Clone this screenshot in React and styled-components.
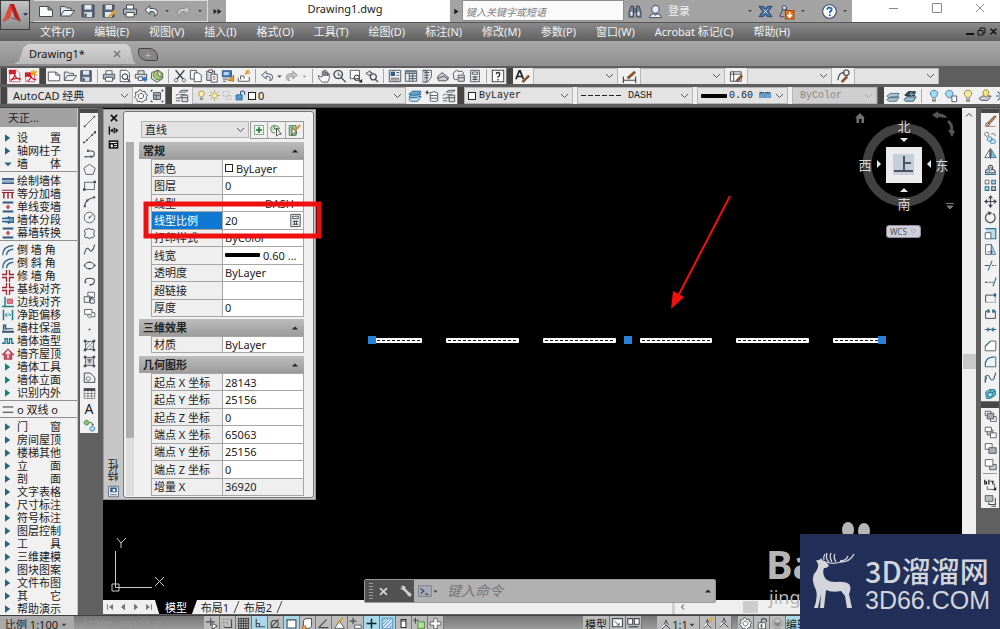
import React from "react";
import styled, { createGlobalStyle, css } from "styled-components";

const K = "#454b52";
const B = "#2f7296";
const L = "#b9dcea";
const W = "#ffffff";
const R = "#b3202c";
const N = "none";

/* Each icon is a list of [path, stroke, fill, strokeWidth] on a 16 x 16 grid. */
const icons = {
  newFile: [["M1.5 3.5H10L14.5 7V13.5H1.5Z M10 3.5V7H14.5", K, "#fbfcfd"]],
  open: [["M1.5 13V3.5H6L7.5 5H12V7", K, "#dfe6ee"], ["M1.5 13L5 7.5H15.5L11.5 13Z", K, "#eef3f8"]],
  save: [["M2 2H14V14H2Z", "#3b4557", "#56627a"], ["M4.500 2H11.500V6.500H4.500Z", N, "#e4e9f0"], ["M4 9H12V14H4Z", N, "#d5dbe4"], ["M5.500 10.500V14", K, N, 2]],
  saveAs: [["M2 2H13V14H2Z", "#3b4557", "#56627a"], ["M4.500 2H11V6.500H4.500Z M4 9H11V14H4Z", N, "#dfe5ed"], ["M8 14L14.500 7.500", "#e2a32f", N, 2.5]],
  print: [["M4.500 6V2H11.500V6", K, W], ["M1.500 6H14.500V11.500H1.500Z", K, "#aeb6bf"], ["M4 9.500H12V14H4Z", K, W]],
  undo: [["M2 7L7 2.500V5.500H10.500Q14.500 6 14.500 9.500T11 13.500Q12.500 11 11.500 9.500T7 8.500V11.500Z", K, "#e7edf5"]],
  redo: [["M14 7L9 2.500V5.500H5.500Q1.500 6 1.500 9.500T5 13.500Q3.500 11 4.500 9.500T9 8.500V11.500Z", "#8c8c8c", "#c9c9c9"]],
  caret: [["M3 5.500H13L8 11Z", N, "#444"]],
  caretDim: [["M4 6.500H12L8 10.500Z", N, "#888"]],
  fast: [["M1 3L7 8L1 13Z M8 3L15 8L8 13Z", N, "#222"]],
  play: [["M4 3L12 8L4 13Z", N, "#222"]],
  binoc: [["M2 14V9L4 3H6.500V14Z M9.500 14V3H12L14 9V14Z M6.500 6H9.500V9H6.500", "#3d4756", "#77849a"], ["M3.500 9H5.500V12.500H3.500Z M10.500 9H12.500V12.500H10.500Z", N, "#ecf0f7"]],
  user: [["M8 1.500A4 4.200 0 1 1 7.900 1.500Z", "#3d4756", "#dfe6ef"], ["M1.500 14.500Q2 11 6 10.500L8 12L10 10.500Q14 11 14.500 14.500Z", "#3d4756", "#e9eef5"]],
  exchange: [["M1 2.500H6L8 5L10 2.500H15L11 8L15 13.500H10L8 11L6 13.500H1L5 8Z", "#27466f", "#4a6fa5"], ["M6 6L8 8L10 6M6 10L8 8L10 10", "#e8eef8", N]],
  triApp: [["M6 2.500A2 2 0 1 1 5.900 2.500M4.500 6L1.500 12.500M8 5L9 8M1.500 13H6", "#4a5568", "#dbe2ed"], ["M7 7H15V15H7Z", "#a9480f", "#e0701e"], ["M11 8.500V12.500M9 11L11 13.500L13 11", W, N, 1.5]],
  help: [["M8 .8A7.200 7.200 0 1 1 7.900 .8Z", "#44506a", W, 1.2], ["M5.500 6Q6 3.500 8.300 3.800Q11 4.200 10.200 6.500Q9.500 7.500 8.500 8.200L8.300 9.800M8.300 11V13", "#3563ad", N, 2]],
  pdf: [["M2 1.500H10L13.500 5V14.500H2Z", "#c58", W], ["M1 1H9V6H1Z", N, "#cf202b"], ["M3 13C7 10 8 7 7.500 5.500C8 10 11 12 14.500 11.500C10 10 6 11 3 13", "#d01f2c", N, 1.5]],
  pdfStar: [["M2 4.500H12V14.500H2Z", "#c58", W], ["M1 4H8V9H1Z", N, "#cf202b"], ["M4 14C8 11 8 9 7.500 7.500C9 11 10 12 14 12", "#d01f2c", N, 1.5], ["M11 0L12 3L15.500 1.500L13.500 5L15.500 8L11.500 6.500L8 8L9 4.500L7 2L10 2.500Z", N, "#f2a516"]],
  preview: [["M2.500 1.500H10L13 4.500V14.500H2.500Z", K, W], ["M8 5.500A3.200 3.200 0 1 1 7.900 5.500M10.500 11L14 15", K, N, 1.4]],
  plot: [["M4.500 6V2H11.500V6M1.500 6H14.500V10.500H1.500Z", K, "#dde1e5"], ["M5 9H10V13H5Z", K, W], ["M9 10.500H12V8L15.500 12L12 15.500V13H9Z", N, "#2a74bd"]],
  globe: [["M2 4L9 1.500L14.500 5V11L8 15L1.500 11Z", K, "#dbe7d9"], ["M9 2A5 5 0 1 1 8.900 2Z", "#4d7a3a", "#a8c66c"], ["M9 2V7L13 9", K, W]],
  cut: [["M3 1.500L12 12M13 1.500L4 12", K, N, 1.6], ["M3.500 11A1.900 1.900 0 1 1 3.400 11M12.500 11A1.900 1.900 0 1 1 12.400 11", K, W]],
  copy: [["M1.500 1.500H8.500V11.500H1.500Z", K, "#f3f5f7"], ["M6 4.500H11L14 7V14.500H6Z", K, W]],
  paste: [["M2 2.500H11V13H2Z", K, "#cfd3d6"], ["M4.500 1H8.500V4H4.500Z", K, W], ["M7 6H14V15H7Z M9 9H12M9 11.500H12", K, W]],
  match: [["M1.500 2H12V9H1.500Z", "#2b568d", "#3e79bd"], ["M3 3.500H9V7H3Z", N, "#b8d8f0"], ["M2 11.500H8M2 14H6", K, N], ["M8 13L14.500 7V14Z", "#b06b1e", "#e59b3a"]],
  block: [["M1.500 10V14H14V9M4 12V8H8V11", K, W], ["M9 6L14 1.500M10 4L15 5M11 1V6", "#e09632", N, 1.5]],
  hand: [["M4 9L1.500 7.500Q.8 9 4 13L6 15H12L14 11V5.500H12.300V8V3.500H10.200V8V1.500H8V8V3H6V9L4 9", K, W]],
  zoomRt: [["M6 1.500A4.800 4.800 0 1 1 5.900 1.500M9.500 10L14.500 15", K, N, 1.5], ["M6 4V7H9", K, N]],
  zoomWin: [["M1.500 1.500H12V11H1.500Z", K, W], ["M9 7A3 3 0 1 1 8.900 7M11 12L14.500 15.500", K, N, 1.4], ["M15 11V15H11Z", N, "#222"]],
  zoomPrev: [["M6 2L1 5L6 8V6.300H8V4H6Z", K, "#dce3ea"], ["M9.500 5.500A3.500 3.500 0 1 1 9.400 5.500M12 12L15 15", K, N, 1.5]],
  props: [["M1.500 1.500H14.500V14.500H1.500Z", K, "#f3f6f9"], ["M3 3H8V8H3Z", N, "#315a8d"], ["M9.500 4H13M9.500 7H13M3 10.500H13M3 12.500H13", K, N]],
  center: [["M1.500 2H14.500V14H1.500Z M1.500 5H14.500M6 5V14M10 5V14M6 8H14M6 11H14", K, "#e3ebf2"], ["M2 2H14V4H2Z", N, "#65809c"]],
  palettes: [["M3.500 1.500H13V9L9 14.500H3.500Z", K, W], ["M3 2H8V15H3", K, "#c7ccd0"], ["M5 4H11M5 7H11M5 10H10", K, N]],
  sheet: [["M1.500 9L7 4L14.500 10L12 13.500H3Z", K, "#c9cdd1"], ["M2 11L9 8L14 12", K, N]],
  markup: [["M3 3Q5 0 8 3Q13 1 13 6M3 3Q0 6 2 8Q1 13 6 12", K, N], ["M7 7H14V14H7Z M7 10H14", K, "#d7dbdf"]],
  calc: [["M3 1.500H13V14.500H3Z", K, "#eef1f4"], ["M5 3.500H11V6H5Z", K, W], ["M5 9H11M5 12H11M7 8V13M9 8V13", K, N]],
  qmark: [["M1.500 1.500H14.500V14.500H1.500Z", K, W, 1.2], ["M6 6Q6 4 8 4T10 6T8 9V10M8 11.500V13", "#333", N, 1.6]],
  textBrush: [["M1 11L4.500 2H5.500L9 11M2.500 8H7.500", "#222", N, 1.8], ["M8 14L15 7", "#7a5230", N, 2.6]],
  dimBrush: [["M1.500 8V15M14.500 8V15M1.500 12H14.500", K, N, 1.3], ["M6 10L14 3", "#8a5630", N, 3]],
  tableBrush: [["M1.500 3H13V13H1.500Z M1.500 5.500H13M5 3V13", K, W], ["M8 13L14 7", "#8a5630", N, 3]],
  leadBrush: [["M2 12Q3 3 9 4", K, N, 1.4], ["M11 1A3 3 0 1 1 10.900 1", K, N, 1.3], ["M6 14L12 8", "#8a5630", N, 3]],
  gear: [["M8 1L9.500 3.200L12.500 2.500L13 5.500L15.500 7L14 9.500L14.500 12.500L11.500 13L9.500 15.500L7 14L4 14.500L3.200 11.500L.8 9.500L2.200 7L1.500 4L4.500 3.400L6 1Z", K, "#f3f5f7"], ["M8 5A3 3 0 1 1 7.900 5", K, W]],
  workspace: [["M1.500 3V1.500H3M13 1.500H14.500V3M14.500 13V14.500H13M3 14.500H1.500V13", K, N, 1.3], ["M4 4H12V12H4Z M4 7H12M7 7V12", K, "#a3b3c3"]],
  layers: [["M5 3.500L8 1.500H15L12 3.500Z M5 6.500H12M5 9.500H8", K, W], ["M1 7.500L4 5.500M1 10.500H6M1 13.500H6", K, N], ["M8 7H14.500V14.500H8Z M8 10H14.500", K, "#dfe3e6"]],
  bulb: [["M8 1.500Q13 2 12 6.500L9.500 10H6.500L4 6.500Q3 2 8 1.500", "#8a7b3a", "#f9efa7"], ["M6.500 11V14H9.500V11", "#666", "#bbb"]],
  bulbBlue: [["M8 1.500Q13 2 12 6.500L9.500 10H6.500L4 6.500Q3 2 8 1.500", "#3c7fa6", "#a5daf0"], ["M6.500 11V14H9.500V11", "#666", "#bbb"]],
  bulbDouble: [["M6 1.500Q11 2 10 6.500L7.500 10H4.500L2 6.500Q1 2 6 1.500", "#3c7fa6", "#a5daf0"], ["M9 8H14.500V14.500H9Z", K, W]],
  bulbLayers: [["M1 11L5 8H15L11 13H4Z", K, "#c9d2da"], ["M9 1Q13 1 12 6L10 9H8L6 6Q5 1 9 1", "#8a7b3a", "#f5e57b"]],
  sun: [["M8 4.500A3.500 3.500 0 1 1 7.900 4.500", "#9a8232", "#fff2a0"], ["M8 0V3M8 13V16M0 8H3M13 8H16M2.500 2.500L4.500 4.500M11.500 11.500L13.500 13.500M13.500 2.500L11.500 4.500M4.500 11.500L2.500 13.500", "#9a8232", N]],
  ghost: [["M2 2H10V9H2Z M7 8H13V14H7Z", "#bbb", "#e5e5e5"]],
  unlock: [["M1.500 7H10.500V14.500H1.500Z", "#275a86", "#4b9ad0"], ["M8 7V4Q8 1.500 11 1.500T14 4V7", "#275a86", N, 1.6]],
  stack: [["M1 12L5 8.500H15L11 14H3Z", "#27628a", "#cfe6f2"], ["M1 9L5 5.500H15L11 10H3Z", "#27628a", "#8cc3df"], ["M1 6L5 2.500H15L11 7H3Z", "#27628a", "#63a9cf"]],
  layPrev: [["M6 4.500Q10 1.500 14.500 4.500V13.500Q10 15 6 13.500Z M6 7.500H14M6 10.500H14", K, W], ["M1 4H5M1 4L3 2M1 4L3 6", K, N, 1.3]],
  layGreen: [["M1 12L5 9H15L12 14H3Z M1 8L5 5H15L12 10H3Z", "#45687b", "#aac6d2"]],
  layDark: [["M1 12L5 9H15L12 14H3Z", K, "#8ebfd0"], ["M2 7L6 3H14L13 8H4Z", "#223", "#3b4b55"], ["M8 6H15M8 6L11 3M8 6L11 9", "#7fc6e3", N]],
  snow: [["M8 1V15M1 8H15M3 3L13 13M13 3L3 13", "#2e6e8c", N, 1.3]],
  line: [["M2 14L14 2", K, N], ["M1 13H3V15H1Z M13 1H15V3H13Z", N, K]],
  xline: [["M1 15L15 1", K, N], ["M4 10H6V12H4Z M10 4H12V6H10Z M14 0H16V3H13Z M0 13H2V15H0Z", N, K]],
  pline: [["M3 12H10Q14 12 14 8.500T10 5H6", K, N, 1.3], ["M5 3H7V6H5Z M2 11H4V13H2Z M9 10.500H11V13H9Z", N, K]],
  polygon: [["M8 1.500L15 6.500L12.500 14H3.500L1 6.500Z", K, N]],
  rect: [["M2 4H14V13H2Z", K, N], ["M0 11.500H3V14.500H0Z M13 2H16V5H13Z", N, K]],
  arc: [["M2 14Q2 5 14 3", K, N, 1.3], ["M1 12.500H3.500V15H1Z M4 5.500H6.500V8H4Z M12.500 1.500H15V4H12.500Z", N, K]],
  circle: [["M8 1.500A6.500 6.500 0 1 1 7.900 1.500M8 8L12 4.500", K, N], ["M7 7H9V9H7Z", N, K]],
  cloud: [["M5 2.500Q8 .5 9 3Q14 1.500 14 6Q12 8 14 10Q14 14 10 13Q8 16 6 13Q1 14 2 10Q4 8 2 6Q1 3 5 2.500", K, N, 1.2]],
  spline: [["M1.500 14Q4 3 7.500 8Q11 14 14.500 2", K, N, 1.3]],
  ellipse: [["M8 4A6 4 0 1 1 7.900 4", K, N, 1.2], ["M7 3H9V5H7Z M13 7H15.500V9H13Z M1 7H3V9H1Z M7 11H9V13H7Z", N, K]],
  ellArc: [["M3 9Q1 4 8 4T14 8T9 12", K, N, 1.3], ["M2 8H4V10H2Z M8 11H10V13H8Z", N, K]],
  insert: [["M6 1.500H14V8H6Z", K, W], ["M1.500 7H8V14H1.500Z M9 10H14V15H9Z", K, "#eef0f2"], ["M7 5L11 9M11 6V9H8", K, N]],
  makeBlock: [["M2 3H11V9H2Z", K, W], ["M8 9A2 2 0 1 1 7.900 9M11 7H14.500V12H10", K, W]],
  dot: [["M7 7H9V9H7Z", N, K]],
  hatch: [["M3 3H13V13H3Z", K, "#e3e5e7"], ["M3 8L8 3M3 13L13 3M8 13L13 8", "#777", N], ["M1 1H4V4H1Z M12 12H15V15H12Z M12 1H15V4H12Z M1 12H4V15H1Z", N, K]],
  gradient: [["M3 3H13V13H3Z", K, "#d0d4d8"], ["M5 5H11L8 11Z", N, "#777"], ["M1 1H4V4H1Z M12 12H15V15H12Z M12 1H15V4H12Z M1 12H4V15H1Z", N, K]],
  region: [["M1.500 2.500H9L14.500 8V14H1.500Z", K, N, 1.2], ["M6.500 7A2.500 2.500 0 1 1 6.400 7", K, N]],
  table: [["M1.500 2H14.500V14H1.500Z M1.500 8H14.500M1.500 11H14.500M6 5V14M10.500 5V14", "#777", W], ["M1 1.500H15V5H1Z", N, K]],
  addSel: [["M4.500 1.500A3 3 0 1 1 4.400 1.500", "#407b31", "#8dc274"], ["M11.500 9A3 3 0 1 1 11.400 9", "#2678ad", "#aedcf4"], ["M8 4Q12 4 12 7M10.500 6L12 8L13.500 6", K, N]],
  erase: [["M1 14H14", "#a37a6a", N], ["M4 10L6 12L15 2L13 1Z", "#7b4d30", "#b98050"], ["M1.500 12L4 9L7 12L4 14Z", "#555", "#e4a4a0"]],
  copyObj: [["M3.500 1.500A2.500 2.500 0 1 1 3.400 1.500M9 4Q13 2 14 6", K, W], ["M7 7A3 3 0 1 1 6.900 7M11 10A3 3 0 1 1 10.900 10", "#2678ad", "#c4e5f5"]],
  mirror: [["M7 3V13H1Z", K, W], ["M9 3V13H15Z", "#2b6f98", "#79bfe0"], ["M8 1V15", K, N]],
  offset: [["M2 12Q1 8 5 8Q5 2 9 3Q12 4 10 8Q14 8 14 12Z", K, N, 1.3], ["M4 13Q3 10 7 10Q6 5 8.500 5Q10 6 9 9.500", B, L], ["M1 14H15", B, N, 1.5]],
  array: [["M1.500 1.500H6V6H1.500Z", K, W], ["M9.500 1.500H14V6H9.500Z M1.500 9.500H6V14H1.500Z", B, L, 1.3], ["M9.500 9.500H14V14H9.500Z", K, L, 1.3]],
  move: [["M8 1V15M1 8H15", K, N, 1.3], ["M8 0L11 4H5Z M8 16L11 12H5Z M0 8L4 5V11Z M16 8L12 5V11Z", N, K]],
  rotate: [["M6 2.500A6 6 0 1 0 11 3.200", K, N, 1.5], ["M5 0L10 2.500L6 5.500Z", N, K]],
  scale: [["M1.500 2H14.500V14.500H8", B, L, 1.4], ["M1.500 7H8.500V14.500H1.500Z", K, W]],
  stretch: [["M2 2H9V14H2Z", K, W], ["M9 2L14.500 14H9Z", B, L], ["M4 11H10M8 9L10.500 11L8 13", K, N]],
  trim: [["M1 8H6M10 8H12M13.500 8H15", K, N, 1.3], ["M5 14L10 2", B, N, 1.4]],
  extend: [["M1 9H5M6.500 9H9M10 9H11.500", K, N, 1.3], ["M11 14L15 3", B, N, 1.4]],
  breakPt: [["M2 14V5H12", K, N, 1.2], ["M12 3H15V7H12Z", N, "#275f87"], ["M2 14H14V7", "#7fa1b5", N]],
  breakObj: [["M5 5H2V14H14V5H11", K, N, 1.2], ["M4 3H7V7H4Z M10 3H13V7H10Z", N, "#2e6991"]],
  join: [["M1 8H15", K, N, 1.2], ["M4 5L8 8L4 11Z M12 5L8 8L12 11Z", N, "#2e7d9b"]],
  chamfer: [["M1.500 14.500V9L8 2.500H14.500V14.500Z", K, W], ["M1.500 9L8 2.500", B, N, 1.4]],
  fillet: [["M1.500 14.500Q1 2.500 12 2.500H14.500V14.500Z", K, "#eaf5fa"], ["M1.500 13Q1 2.500 12 2.500", B, N, 1.4]],
  blend: [["M1.500 14V7Q5 3 7 8T12 10", B, N, 1.3], ["M12 10L14.500 2M1.500 14L3 7", K, N, 1.3]],
  explode: [["M2 6L7 3H13L14 5V10L8 14H3Z", "#1d6e86", "#62bbd2"], ["M5 7H10V12H5Z M8 3V7M10 7L14 5", "#1d6e86", "#b4e4f0"]],
  orderFront: [["M1.500 1.500H8.500V7H1.500Z M8 8H15V14H8Z", K, W], ["M4 4H12V11H4Z", K, "#a9adb1"]],
  orderBack: [["M4 5H11V11H4Z", K, "#c8ccd0"], ["M1.500 1.500H9V7H1.500Z M8 8.500H15V14.500H8Z", K, W]],
  orderAbove: [["M1.500 2H10V9H1.500Z", K, W], ["M6 7H15V14H6Z", K, "#a9adb1"]],
  orderUnder: [["M7 8H15V14.500H7Z", K, "#c8ccd0"], ["M1.500 2H11V10H1.500Z", K, W]],
  orderText: [["M1 2V8M3 4V8M6 2V8M8 4H11V8", "#111", N, 1.5], ["M4 10V14H13V7", K, N], ["M15 11V15H11Z", N, "#111"]],
  orderHatch: [["M1.500 2H11V9H1.500Z", K, "#b9bdc1"], ["M6 10V13H14V5M9 15H15", K, N, 1.3]],
  wall: [["M0 4H16V6.500H0Z M0 9.500H16V12H0Z", N, "#3b5f85"], ["M0 6.500H16V9.500H0Z", N, "#9fb8cf"]],
  wallDiv: [["M0 3H16M0 6H16", "#8c1f2b", N, 1.6], ["M2.500 6V14M8 6V14M13.500 6V14", "#a02833", N, 2]],
  wallLine: [["M1 2H15M1 14H15", "#2f597c", N, 2.4], ["M8 5V11M5 8H11", R, N, 1.6]],
  wallSeg: [["M0 6H9V3M0 10H9V13M9 5H16V11H9", "#33628c", "#6ea2c9", 2]],
  bend: [["M1 15Q1 3 15 2M6 15Q6 8 15 7", "#35678d", N, 1.8]],
  crossWall: [["M6 0V6H0M10 0V6H16M0 10H6V16M16 10H10V16", "#9b2430", N, 1.7]],
  edge: [["M4 1V14M0 14H16", "#1f7f86", N, 2], ["M7 4H14V10H7Z", "#c8445b", "#d58090"]],
  dist: [["M2 1V15M14 1V15", "#1d7e90", N, 2], ["M4 8H12M4 8L7 5M4 8L7 11M12 8L9 5", "#1d7e90", N]],
  insul: [["M0 13H16", "#33506e", N, 2.6], ["M2 11V4H5V9H15", "#33506e", "#8ba8c2", 1.6]],
  shape: [["M0 11H4V5H7V11H10V5H13V11H16", "#1e7a8b", N, 1.8]],
  roof: [["M0 9L8 1L16 9H13V15H3V9Z", "#8e1f32", "#c75565"], ["M8 5V14M5 8L8 4L11 8", W, N, 1.5]],
  tri: [["M4 3L11 8L4 13Z", N, "#24647f"]],
  triGreen: [["M4 3L11 8L4 13Z", N, "#13847c"]],
  triDown: [["M3 6H13L8 11Z", N, "#24647f"]],
  dbl: [["M1 4H15M1 11H15", "#333", N, 1.5]],
  close: [["M3 3L13 13M13 3L3 13", "#111", N, 2.6]],
  pin: [["M2 2V14", "#111", N, 2], ["M3 8L7 5V11Z M15 8L11 4V12Z", N, "#111"], ["M9 4V12", "#111", N, 2]],
  sheetMenu: [["M1 2H15V14H1Z", N, "#111"], ["M3 5H13M9 8H13M9 11H13", W, N, 1.4], ["M4 8H7V12H4Z", N, W]],
  paletteIcon: [["M2 1.500H14V14.500H2Z", "#48596d", "#edf3fa"], ["M4 3H12V9H4Z", N, "#31598c"], ["M7 5H10V8H7Z", N, W], ["M4 12H12", K, N]],
  toggleAdd: [["M2 2H14V14H2Z", "#67906a", "#edf6ed"], ["M8 4V12M4 8H12", "#197530", N, 2]],
  selectObj: [["M5 2A4.500 4.500 0 1 0 6 11M5 2V6H12Q11 2 5 2", "#3f6f45", "#d1e8cd"], ["M8 5V15L10.500 12.500H14Z", "#333", W]],
  quick: [["M1.500 2H10V14H1.500Z", "#3f6f45", "#a7cfa1"], ["M5 4V14L7.500 11H11Z", "#333", W], ["M9 8L15 1", "#d39624", N, 2.4]],
  wrench: [["M4 4L13 13", "#cfcfcf", N, 3.4], ["M2 2Q5 0 7 3L6 6Q2 7 1 4L3 5L4 4Z M10 11Q12 9 15 12L14 15Q11 15 10 13", "#cfcfcf", "#cfcfcf"]],
  xGray: [["M3 3L13 13M13 3L3 13", "#d3d3d3", N, 2.6]],
  prompt: [["M.5 2H15.500V14H.5Z", "#777b8b", "#a8abb8"], ["M3 5L6.500 8L3 11M8 11.500H12", "#444856", N, 1.5]],
  up: [["M3 10.500H13L8 5.500Z", N, "#222"]],
  snapInfer: [["M7 1V11M1 6H12", K, N, 1.3], ["M9 8L15 11L9 15Z", "#333", W]],
  snap: [["M3 3h1M7 3h1M11 3h1M3 7h1M7 7h1M3 11h1", K, N, 1.3], ["M13 3V13H4", K, N, 1.3]],
  grid: [["M1 2H15M1 5H15M1 8H15M1 11H15M1 14H15M2 1V15M5 1V15M8 1V15M11 1V15M14 1V15", "#333", N]],
  ortho: [["M4 2V12H15M4 8H8V12", K, N, 1.4]],
  polar: [["M2 13H14M2 13L12 3M7 4A4.500 4.500 0 1 1 6.900 4", K, N, 1.3]],
  osnap: [["M2.500 3.500H13.500V13.500H2.500Z", K, W, 1.4]],
  cube: [["M3 6Q3 2 8 2H13V10Q13 14 8 14H3Z", K, W, 1.2], ["M2 11H6V15H2Z", "#b06b1e", "#eaaa5c"]],
  angle: [["M2 13H14M2 13L12 3", K, N, 1.5]],
  otrack: [["M2 14L8 5L14 14Z", K, W], ["M6 8L12 1", "#d39624", N, 2]],
  dyn: [["M5 1V9M1 5H9", K, N, 1.4], ["M7 10H15V14H7Z", K, W]],
  plus: [["M8 2V14M2 8H14", "#10222e", N, 1.8]],
  trans: [["M1.500 1.500H14.500V14.500H1.500Z M2 5L5 2M2 9L9 2M2 13L13 2M6 14L14 6M10 14L14 10", "#477fae", "#cde7fa"]],
  qp: [["M5 3H11V13H5Z M5 5H11", "#333", W, 1.3]],
  cycle: [["M3 1V8M0 4H7", K, N, 1.3], ["M6 6H14V14H6Z", "#42852f", "#b6e0a0"]],
  whitePlus: [["M6 1.500H10V6H14.500V10H10V14.500H6V10H1.500V6H6Z", "#555", W]],
  modelSp: [["M2 2H14V12H2Z", K, W, 1.3], ["M4 5L10 10M10 7V10H7", K, N]],
  layoutSp: [["M1 2H7V9H1Z M9 2H15V9H9Z", K, W, 1.3], ["M2 12H14", K, N, 1.5]],
  anno: [["M8 1V8L2 14M8 8L14 14M5 8L8 2L11 8", K, "#fbfbfb", 1.2]],
  annoStar: [["M8 3V9L3 14M8 9L13 14M6 8L8 3L10 8", K, W], ["M11 4L15 1M12 1V6", "#e2a32f", N, 2]],
  lockOpen: [["M4 7H13V14.500H4Z", K, "#f2f2f2"], ["M8 7V4Q8 2 11 2T14 4V6", K, N, 1.4], ["M8 9V13", "#555", N, 2]],
  ball: [["M8 2A6 6 0 1 1 7.900 2", "#888", "#c4c4c4"], ["M4 5Q8 9 12 5Q13 12 8 12T4 5", N, "#888"]],
  first: [["M3 2V14", "#888", N, 2], ["M14 2L6 8L14 14Z", N, "#777"]],
  prev: [["M12 1L4 8L12 15Z", N, "#777"]],
  next: [["M4 1L12 8L4 15Z", N, "#777"]],
  last: [["M13 2V14", "#888", N, 2], ["M2 2L10 8L2 14Z", N, "#777"]],
  chevLeft: [["M10 3L5 8L10 13", "#333", N, 2]],
  chevUp: [["M2 11L8 5L14 11", "#444", N, 2]],
};

const Svg = styled.svg`
  display: block;
  flex: none;
`;

function Icon({ name, size = 14 }) {
  return (
    <Svg width={size} height={size} viewBox="0 0 16 16" aria-hidden="true">
      {icons[name].map(([d, stroke, fill, w = 1], i) => (
        <path key={i} d={d} stroke={stroke} fill={fill} strokeWidth={w} />
      ))}
    </Svg>
  );
}

const Global = createGlobalStyle`
  * { box-sizing: border-box; }
  body {
    margin: 0;
    overflow: hidden;
    background: #606060;
    color: #222;
    font: 11px/16px "Noto Sans", "Noto Sans CJK SC", sans-serif;
  }
  button, input, select {
    font: inherit;
    color: inherit;
    margin: 0;
    padding: 0;
    border: 0;
    border-radius: 0;
    background: none;
    outline: none;
  }
  button { white-space: nowrap; }
`;

const Page = styled.div`
  height: 100vh;
  display: flex;
  flex-direction: column;
  overflow: hidden;
  position: relative;
`;

/* ---------- Title bar ---------- */
const TitleBar = styled.header`
  flex: none;
  height: 22px;
  display: flex;
  background: #a3a3a3;
  padding-left: 34px;
`;

const AppButton = styled.button`
  position: absolute;
  left: 0;
  top: 0;
  z-index: 2;
  width: 30px;
  height: 30px;
  border: 1px solid #3c3c3c;
  background: linear-gradient(#c4c4c4, #8b8b8b);
`;

const QuickAccess = styled.div`
  flex: none;
  width: 174px;
  display: flex;
  align-items: center;
  justify-content: space-between;
  padding: 0 3px 1px;
  border: solid #dadada;
  border-width: 1px 1px 1px 0;
`;

const IconButton = styled.button`
  flex: none;
  display: flex;
  align-items: center;
  justify-content: center;
  width: ${(p) => p.$w || 16}px;
  height: ${(p) => p.$h || 16}px;
`;

const DocTitle = styled.h1`
  flex: none;
  width: 224px;
  margin: 0;
  padding-left: 14px;
  background: #fff;
  font-size: 11px;
  font-weight: 400;
  line-height: 17px;
  text-align: center;
`;

const Search = styled.input`
  flex: none;
  width: 162px;
  height: 21px;
  padding: 2px 3px 0;
  background: #fafafa;
  border: 1px solid #8d8d8d;
  font-size: 10px;
  font-style: italic;
  &::placeholder { color: #808080; opacity: 1; }
`;

const Account = styled.div`
  flex: 1;
  display: flex;
  align-items: center;
  gap: 5px;
  padding: 0 4px 0 3px;
`;

const Login = styled.button`
  color: #f1f1f1;
  flex: 1;
  text-align: left;
`;

const WindowControls = styled.div`
  flex: none;
  width: 148px;
  display: flex;
  justify-content: space-between;
  padding: 0 12px 4px 34px;
  background: #fff;
`;

/* ---------- Menu and document tabs ---------- */
const MenuBar = styled.nav`
  flex: none;
  height: 19px;
  display: flex;
  align-items: center;
  gap: 20px;
  padding: 0 2px 1px 40px;
  background: linear-gradient(#8a8a8a, #606060);
  border-top: 1px solid #555;
  color: #f2f2f2;
`;

const MdiControls = styled.div`
  margin-left: auto;
  display: flex;
  align-items: center;
  gap: 3px;
`;

const TabStrip = styled.div`
  flex: none;
  height: 25px;
  display: flex;
  align-items: flex-end;
  padding: 0 0 2px 14px;
  background: linear-gradient(#a8a8a8, #8e8e8e);
`;

const DocTab = styled.div`
  display: flex;
  align-items: center;
  width: 122px;
  height: 20px;
  padding: 0 15px;
  justify-content: space-between;
  background: linear-gradient(#d4d4d4, #b9b9b9);
  clip-path: polygon(0 100%, 4% 86%, 8% 15%, 12% 0, 92% 0, 95% 15%, 98% 86%, 100% 100%);
`;

const TabName = styled.span`
  color: #151515;
`;

const NewTab = styled.button`
  width: 20px;
  height: 13px;
  margin: 0 0 3px 2px;
  border: 1px solid #444;
  border-radius: 2px 9px 2px 9px;
  background: #858585;
  color: #bbb;
  line-height: 10px;
`;

/* ---------- Toolbars ---------- */
const ToolRow = styled.div`
  flex: none;
  height: ${(p) => p.$h}px;
  display: flex;
  padding-top: ${(p) => p.$top}px;
  padding-bottom: 3px;
  background: #5e5e5e;
`;

const Grip = styled.span`
  flex: none;
  width: 7px;
  background: #454545;
  border-left: 1px solid #777;
`;

const ToolGroup = styled.div`
  flex: ${(p) => p.$flex || "none"};
  display: flex;
  align-items: center;
  min-width: 0;
  overflow: hidden;
  gap: ${(p) => p.$gap || 0}px;
  background: #f0f0f0;
`;

const Divider = styled.span`
  flex: none;
  width: 1px;
  height: 14px;
  margin: 0 3px;
  background: #a5a5a5;
`;

const Combo = styled.label`
  position: relative;
  flex: none;
  display: flex;
  align-items: center;
  gap: 2px;
  width: ${(p) => p.$w}px;
  height: 17px;
  padding: 0 3px;
  background: ${(p) => (p.$dim ? "#cfcfcf" : "#e3e3e3")};
  border: 1px solid #b5b5b5;
  color: ${(p) => (p.$dim ? "#888" : "#222")};
`;

const ComboSelect = styled.select`
  appearance: none;
  flex: 1;
  min-width: 0;
  height: 15px;
  padding-left: ${(p) => p.$indent || 0}px;
  font-family: ${(p) => (p.$mono ? '"Liberation Mono", monospace' : "inherit")};
  font-size: ${(p) => (p.$mono ? 10 : 11)}px;
  line-height: 15px;
  opacity: 1;
`;

function Dropdown({ w, label, value, mono, dim, indent, children }) {
  return (
    <Combo $w={w} $dim={dim}>
      {children}
      <ComboSelect aria-label={label} $mono={mono} $indent={indent} disabled={dim}>
        <option>{value}</option>
      </ComboSelect>
      <Svg width="9" height="6" viewBox="0 0 9 6">
        <path d="M1 1L4.500 4.500L8 1" fill="none" stroke={dim ? "#aaa" : "#555"} />
      </Svg>
    </Combo>
  );
}

const Swatch = styled.span`
  flex: none;
  width: 8px;
  height: 8px;
  border: 1px solid #222;
  background: #fff;
`;

const WeightBar = styled.span`
  flex: none;
  width: ${(p) => p.$w}px;
  height: 4px;
  border-radius: 1px;
  background: #000;
`;

const DashSample = styled.span`
  flex: none;
  width: 42px;
  height: 1px;
  background: repeating-linear-gradient(90deg, #222 0 5px, transparent 5px 7px);
`;

/* ---------- Work area ---------- */
const Work = styled.main`
  flex: 1;
  min-height: 0;
  display: flex;
  align-items: flex-start;
  border-top: 1px solid #444;
`;

const SidePanel = styled.aside`
  flex: none;
  width: 78px;
  height: 100%;
  overflow: hidden;
  display: flex;
  flex-direction: column;
  background: #f1f1f1;
  border-right: 1px solid #c8c8c8;
`;

const SideTitle = styled.h2`
  flex: none;
  height: 19px;
  margin: 0 0 4px;
  padding: 2px 8px;
  background: #a2a2a2;
  font-size: 11px;
  font-weight: 400;
  line-height: 16px;
`;

const SideItem = styled.button`
  flex: none;
  display: flex;
  align-items: center;
  gap: 3px;
  height: 13px;
  padding-left: 2px;
  line-height: 13px;
  text-align: left;
  white-space: pre;
`;

const SideRule = styled.hr`
  flex: none;
  width: 100%;
  height: 1px;
  margin: 1px 0 2px;
  border: 0;
  background: #8f8f8f;
`;

const ToolColumn = styled.div`
  flex: none;
  width: 18px;
  margin: 0 ${(p) => p.$mr || 0}px 0 ${(p) => p.$ml || 0}px;
  display: flex;
  flex-direction: column;
  align-items: center;
  background: #f1f1f1;
`;

const ColumnGrip = styled.span`
  width: 100%;
  height: ${(p) => p.$h || 5}px;
  background: #484848;
  border-top: 1px solid #777;
`;

const ColumnRule = styled.span`
  width: 14px;
  height: 1px;
  margin: 1px 0 2px;
  background: #999;
`;

const LetterA = styled.span`
  font-size: 14px;
  line-height: 16px;
  color: #222;
`;

const Center = styled.section`
  flex: 1;
  min-width: 0;
  height: 100%;
  display: flex;
  flex-direction: column;
  padding-bottom: 1px;
`;

const ViewRow = styled.div`
  flex: 1;
  min-height: 0;
  display: flex;
`;

const Canvas = styled.div`
  flex: 1;
  min-width: 0;
  position: relative;
  background: #000;
`;

const Drawing = styled.svg`
  position: absolute;
  inset: 0;
  width: 100%;
  height: 100%;
  overflow: hidden;
`;

const Overlay = styled.svg`
  position: absolute;
  left: 40px;
  top: 93px;
  pointer-events: none;
`;

const VScroll = styled.div`
  flex: none;
  width: 14px;
  display: flex;
  flex-direction: column;
  align-items: center;
  padding-top: 3px;
  background: #efefef;
`;

const VThumb = styled.span`
  width: 13px;
  height: 15px;
  margin-top: 235px;
  background: #c9c9c9;
`;

/* ---------- Properties palette ---------- */
const Palette = styled.section`
  position: absolute;
  left: 0;
  top: 1px;
  width: 213px;
  height: 391px;
  display: flex;
  background: #c6c6c6;
  border: 1px solid #999;
  padding: 1px 1px 1px 0;
`;

const PaletteRail = styled.div`
  flex: none;
  width: 19px;
  display: flex;
  flex-direction: column;
  align-items: center;
`;

const RailTitle = styled.h2`
  margin: auto 0 4px;
  font-size: 11px;
  font-weight: 400;
  line-height: 14px;
  writing-mode: vertical-rl;
  transform: rotate(180deg);
`;

const PaletteBody = styled.div`
  flex: 1;
  display: flex;
  gap: 5px;
  padding: 9px 9px 0 2px;
  background: #f0f0f0;
  border: 1px solid #777;
  border-radius: 3px;
`;

const PaletteScroll = styled.div`
  flex: none;
  width: 8px;
  height: 354px;
  margin-top: 21px;
  background: #dcdcdc;
`;

const PaletteThumb = styled.div`
  height: 296px;
  background: #aeaeae;
`;

const PaletteMain = styled.div`
  flex: 1;
  min-width: 0;
`;

const PaletteHead = styled.div`
  display: flex;
  justify-content: space-between;
  height: 21px;
  padding-left: 2px;
`;

const HeadButtons = styled.div`
  display: flex;
  height: 18px;
  border: 1px solid #999;
  button + button { border-left: 1px solid #aaa; }
`;

const SectionHead = styled.button`
  display: flex;
  align-items: center;
  justify-content: space-between;
  width: 100%;
  height: 17px;
  margin-top: ${(p) => p.$gap || 0}px;
  padding: 0 4px;
  background: linear-gradient(#bcbcbc, #9b9b9b);
  font-weight: 700;
`;

const PropTable = styled.table`
  width: calc(100% - 12px);
  height: ${(p) => p.$h}px;
  margin-left: 12px;
  border-collapse: collapse;
  table-layout: fixed;
`;

const cell = css`
  padding: 0 2px;
  border: 1px solid #a6a6a6;
  font-weight: 400;
  line-height: 15px;
  text-align: left;
  white-space: nowrap;
  overflow: hidden;
`;

const PropName = styled.th`
  ${cell}
  width: 71px;
  background: ${(p) => (p.$on ? "#0f78d0" : "#efefef")};
  color: ${(p) => (p.$on ? "#fff" : "#222")};
`;

const PropValue = styled.td`
  ${cell}
  background: ${(p) => (p.$dim ? "#efefef" : "#fff")};
`;

const ValueLine = styled.div`
  display: flex;
  align-items: center;
  justify-content: ${(p) => p.$justify || "flex-start"};
  gap: 3px;
  height: 15px;
  padding-right: ${(p) => p.$pr || 0}px;
`;

const ValueInput = styled.input`
  width: 60px;
  height: 15px;
`;

/* ---------- View cube ---------- */
const ViewCube = styled.div`
  position: absolute;
  right: 0;
  top: 0;
  width: 112px;
  height: 136px;
`;

const CompassText = styled.text`
  font: 13px "Noto Sans CJK SC", sans-serif;
  fill: #d5d5d5;
  text-anchor: middle;
`;

const Wcs = styled.button`
  position: absolute;
  left: 36px;
  top: 117px;
  width: 35px;
  height: 13px;
  padding-left: 3px;
  display: flex;
  align-items: center;
  gap: 3px;
  border: 1px solid #9090a0;
  border-radius: 3px;
  background: #cfcfdc;
  color: #555;
  font-size: 8px;
  line-height: 10px;
`;

/* ---------- Command line, layout tabs ---------- */
const CommandLine = styled.div`
  position: absolute;
  left: 261px;
  bottom: -3px;
  z-index: 1;
  width: 352px;
  height: 24px;
  display: flex;
  align-items: center;
  background: #b1b1b1;
  border: 1px solid #999;
  border-radius: 2px;
`;

const CommandTools = styled.div`
  flex: none;
  width: 49px;
  height: 100%;
  margin-right: 4px;
  display: flex;
  align-items: center;
  gap: 5px;
  padding-left: 4px;
  background: #515151;
`;

const DotGrip = styled.span`
  width: 4px;
  height: 16px;
  background: repeating-linear-gradient(#999 0 1px, transparent 1px 3px);
`;

const CommandInput = styled.input`
  flex: 1;
  min-width: 0;
  padding-left: 8px;
  font-size: 14px;
  font-style: italic;
  line-height: 20px;
  &::placeholder { color: #777; opacity: 1; }
`;

const LayoutBar = styled.div`
  flex: none;
  height: 14px;
  display: flex;
  align-items: stretch;
  background: #efefef;
  line-height: 14px;
`;

const LayoutTab = styled.button`
  flex: none;
  width: ${(p) => p.$w}px;
  line-height: 13px;
  background: ${(p) => (p.$on ? "#000" : "transparent")};
  color: ${(p) => (p.$on ? "#fff" : "#222")};
  clip-path: ${(p) => (p.$on ? "polygon(0 0, 100% 0, 88% 100%, 10% 100%)" : "none")};
`;

const Slash = () => (
  <Svg width="7" height="14" viewBox="0 0 7 14">
    <path d="M6 1L1 13" stroke="#444" fill="none" />
  </Svg>
);

const HScroll = styled.div`
  flex: 1;
  max-width: 304px;
  margin-left: auto;
  display: flex;
  align-items: center;
  gap: 56px;
  padding-left: 4px;
  border-left: 3px solid #d0d0d0;
`;

const HThumb = styled.span`
  width: 15px;
  height: 12px;
  background: #cccccc;
`;

/* ---------- Status bar ---------- */
const StatusBar = styled.footer`
  flex: none;
  height: 14px;
  display: flex;
  overflow: hidden;
  background: linear-gradient(#777, #9b9b9b);
  border-top: 1px solid #3f3f3f;
`;

const ScaleButton = styled.button`
  flex: none;
  width: 74px;
  height: 17px;
  display: flex;
  align-items: center;
  gap: 2px;
  padding-left: 5px;
  background: #aaa;
`;

const Coords = styled.span`
  flex: none;
  width: 130px;
  padding-left: 7px;
  color: #969696;
  line-height: 17px;
`;

const StatusTile = styled.button`
  flex: none;
  width: ${(p) => p.$w || 16}px;
  height: ${(p) => (p.$text ? 17 : 14)}px;
  display: flex;
  align-items: center;
  justify-content: ${(p) => (p.$start ? "flex-start" : "center")};
  border-right: 1px solid #777;
  background: ${(p) => (p.$on ? "#a9d9e8" : "#bcbcbc")};
`;

const StatusGap = styled.span`
  flex: none;
  width: ${(p) => p.$w}px;
`;

/* ---------- Corner brand ---------- */
const FaintBrand = styled.div`
  position: absolute;
  right: 170px;
  bottom: 20px;
  z-index: 3;
  width: 64px;
  color: #b5b5b5;
  font-family: "Noto Sans", sans-serif;
  pointer-events: none;
`;

const FaintName = styled.div`
  font-size: 40px;
  font-weight: 700;
  line-height: 42px;
`;

const FaintSub = styled.div`
  padding-left: 3px;
  font-size: 18px;
  line-height: 24px;
`;

const Paws = styled.svg`
  position: absolute;
  right: 128px;
  bottom: 87px;
  z-index: 3;
`;

const Brand = styled.div`
  position: absolute;
  right: 0;
  bottom: 0;
  z-index: 4;
  width: 200px;
  height: 95px;
  display: flex;
  gap: 9px;
  padding: 18px 8px 0 12px;
  background: #223059;
  color: #d3d5da;
`;

const BrandText = styled.div`
  white-space: nowrap;
`;

const BrandName = styled.div`
  font: 500 29px/36px "Noto Sans CJK SC", sans-serif;
`;

const BrandSite = styled.div`
  font: 25px/24px "Liberation Sans", sans-serif;
`;

/* ---------- Data ---------- */
const menus = ["文件(F)", "编辑(E)", "视图(V)", "插入(I)", "格式(O)", "工具(T)", "绘图(D)", "标注(N)", "修改(M)", "参数(P)", "窗口(W)", "Acrobat 标记(C)", "帮助(H)"];

const sideGroups = [
  [["tri", "设　　置"], ["tri", "轴网柱子"], ["triDown", "墙　　体"]],
  [["wall", "绘制墙体"], ["wallDiv", "等分加墙"], ["wallLine", "单线变墙"], ["wallSeg", "墙体分段"], ["wallLine", "幕墙转换"]],
  [["bend", "倒 墙 角"], ["bend", "倒 斜 角"], ["crossWall", "修 墙 角"], ["crossWall", "基线对齐"], ["edge", "边线对齐"], ["dist", "净距偏移"], ["insul", "墙柱保温"], ["shape", "墙体造型"], ["roof", "墙齐屋顶"], ["triGreen", "墙体工具"], ["triGreen", "墙体立面"], ["triGreen", "识别内外"]],
  [["dbl", "o 双线 o"]],
  ["门　　窗", "房间屋顶", "楼梯其他", "立　　面", "剖　　面", "文字表格", "尺寸标注", "符号标注", "图层控制", "工　　具", "三维建模", "图块图案", "文件布图", "其　　它", "帮助演示"].map((t) => ["tri", t]),
];

const standardTools = "newFile open save | print preview plot globe | cut copy paste match block | undo caret redo caretDim | hand zoomRt zoomWin zoomPrev | props center palettes sheet markup calc | qmark".split(" ");
const drawTools = "line xline pline polygon rect arc circle cloud spline ellipse ellArc insert makeBlock dot hatch gradient region table A addSel".split(" ");
const modifyTools = "erase copyObj mirror offset array move rotate scale stretch trim extend breakPt breakObj join chamfer fillet blend explode".split(" ");
const orderTools = "orderFront orderBack orderAbove orderUnder | orderText orderHatch".split(" ");
const statusTools = "snapInfer snap grid ortho polar osnap cube angle otrack dyn plus trans qp cycle whitePlus".split(" ");
const statusOn = ["ortho", "osnap", "plus", "trans"];

const general = [
  ["颜色", <ValueLine><Swatch />ByLayer</ValueLine>],
  ["图层", "0"],
  ["线型", <ValueLine $justify="flex-end" $pr={7}>DASH</ValueLine>],
  ["线型比例", <ValueLine $justify="space-between"><ValueInput aria-label="线型比例" defaultValue="20" /><Icon name="calc" size={15} /></ValueLine>],
  ["打印样式", "ByColor"],
  ["线宽", <ValueLine><WeightBar $w={35} />0.60 ...</ValueLine>],
  ["透明度", "ByLayer"],
  ["超链接", ""],
  ["厚度", "0"],
];
const geometry = [["起点 X 坐标", "28143"], ["起点 Y 坐标", "25156"], ["起点 Z 坐标", "0"], ["端点 X 坐标", "65063"], ["端点 Y 坐标", "25156"], ["端点 Z 坐标", "0"], ["增量 X", "36920"]];
const dashes = [[272, 47], [343, 73], [440, 73], [537, 72], [633, 73], [730, 47]];

function Tools({ names, w = 17 }) {
  return names.map((n, i) =>
    n === "|" ? (
      <Divider key={i} />
    ) : (
      <IconButton key={i} aria-label={n} $w={n.startsWith("caret") ? 9 : w}>
        <Icon name={n} size={n.startsWith("caret") ? 7 : 14} />
      </IconButton>
    )
  );
}

function ColumnTools({ names }) {
  return names.map((n, i) =>
    n === "|" ? (
      <ColumnRule key={i} />
    ) : (
      <IconButton key={i} aria-label={n}>{n === "A" ? <LetterA>A</LetterA> : <Icon name={n} size={13} />}</IconButton>
    )
  );
}

function Section({ title, rows, h, gap }) {
  return (
    <>
      <SectionHead $gap={gap}>{title}<Icon name="up" size={10} /></SectionHead>
      <PropTable $h={h}>
        <tbody>
          {rows.map(([name, value]) => (
            <tr key={name}>
              <PropName scope="row" $on={name === "线型比例"}>{name}</PropName>
              <PropValue $dim={name === "增量 X"}>{value}</PropValue>
            </tr>
          ))}
        </tbody>
      </PropTable>
    </>
  );
}

export default function App() {
  return (
    <Page>
      <Global />
      <TitleBar>
        <AppButton aria-label="AutoCAD">
          <Svg width="28" height="28" viewBox="0 0 28 28">
            <path d="M2 21L9 3H13L20 21L14 17L11 9L9 16Z" fill="#b51f1c" />
            <path d="M2 21L9 3L11 9L8 18Z" fill="#df4b38" />
            <path d="M8 16L20 21L12 17Z" fill="#6e0f10" />
            <path d="M22 12H27L24.500 15Z" fill="#2f3e55" />
          </Svg>
        </AppButton>
        <QuickAccess>
          {["newFile", "open", "save", "saveAs", "print", "undo", "caret", "redo", "caret"].map((n, i) => (
            <IconButton key={i} aria-label={n} $w={n === "caret" ? 8 : 17}><Icon name={n} size={n === "caret" ? 6 : 16} /></IconButton>
          ))}
        </QuickAccess>
        <IconButton aria-label="更多" $w={18} $h={22}><Icon name="fast" size={9} /></IconButton>
        <DocTitle>Drawing1.dwg</DocTitle>
        <IconButton aria-label="展开" $w={12} $h={22}><Icon name="play" size={9} /></IconButton>
        <Search aria-label="搜索" placeholder="键入关键字或短语" />
        <Account>
          <Icon name="binoc" size={16} />
          <Icon name="user" size={15} />
          <Login>登录</Login>
          <Icon name="caret" size={6} />
          <Icon name="exchange" size={15} />
          <Icon name="triApp" size={17} />
          <Icon name="caret" size={6} />
          <StatusGap $w={6} />
          <Icon name="help" size={15} />
          <Icon name="caret" size={6} />
        </Account>
        <WindowControls>
          <IconButton aria-label="最小化"><Svg width="10" height="10"><path d="M0 5.500H9" stroke="#888" /></Svg></IconButton>
          <IconButton aria-label="最大化"><Svg width="10" height="10"><path d="M.5 .5H9.500V9.500H.5Z" stroke="#888" fill="none" /></Svg></IconButton>
          <IconButton aria-label="关闭"><Svg width="10" height="10"><path d="M1 1L9 9M9 1L1 9" stroke="#888" /></Svg></IconButton>
        </WindowControls>
      </TitleBar>

      <MenuBar>
        {menus.map((m) => <button key={m}>{m}</button>)}
        <MdiControls>
          <Svg width="8" height="9"><path d="M0 7H8" stroke="#111" strokeWidth="2" /></Svg>
          <Svg width="9" height="9"><path d="M3 3V1H8V6H6M1 3.500H6V8H1Z" stroke="#111" fill="none" /></Svg>
          <Icon name="close" size={9} />
        </MdiControls>
      </MenuBar>

      <TabStrip>
        <DocTab><TabName>Drawing1*</TabName><Svg width="8" height="8"><path d="M1 1L7 7M7 1L1 7" stroke="#777" strokeWidth="1.500" /></Svg></DocTab>
        <NewTab aria-label="新建图形">+</NewTab>
      </TabStrip>

      <ToolRow $h={21} $top={2}>
        <Grip />
        <ToolGroup><Tools names={["pdf", "pdfStar"]} w={16} /></ToolGroup>
        <Grip />
        <ToolGroup><Tools names={standardTools} w={16} /></ToolGroup>
        <Grip />
        <ToolGroup $gap={2}>
          {[["textBrush", "文字样式"], ["dimBrush", "标注样式"], ["tableBrush", "表格样式"], ["leadBrush", "引线样式"]].map(([n, label]) => (
            <React.Fragment key={n}>
              <IconButton aria-label={label} $w={18}><Icon name={n} size={15} /></IconButton>
              <Dropdown w={85} label={label} value="" />
            </React.Fragment>
          ))}
        </ToolGroup>
      </ToolRow>

      <ToolRow $h={20} $top={0}>
        <Grip />
        <ToolGroup>
          <Dropdown w={126} label="工作空间" value="AutoCAD 经典" indent={2} />
          <Tools names={["gear", "workspace"]} w={16} />
        </ToolGroup>
        <Grip />
        <ToolGroup>
          <Tools names={["layers"]} w={20} />
          <Dropdown w={214} label="图层" value="0">
            {["bulb", "sun", "ghost", "unlock"].map((n) => <Icon key={n} name={n} size={11} />)}
            <Swatch />
          </Dropdown>
          <Tools names={["stack", "layPrev", "layers"]} />
        </ToolGroup>
        <Grip />
        <ToolGroup $gap={4}>
          <Dropdown w={109} label="颜色" value="ByLayer" mono indent={1}><Swatch /></Dropdown>
          <Dropdown w={116} label="线型" value="DASH" mono indent={3}><DashSample /></Dropdown>
          <Dropdown w={91} label="线宽" value="0.60 mm" mono><WeightBar $w={26} /></Dropdown>
          <Dropdown w={85} label="打印样式" value="ByColor" mono dim indent={4} />
        </ToolGroup>
        <Grip />
        <ToolGroup $flex="1">
          <Tools names={["layGreen", "layDark", "|", "bulbBlue", "bulbDouble", "bulb", "bulbLayers", "snow"]} />
        </ToolGroup>
      </ToolRow>

      <Work>
        <SidePanel>
          <SideTitle>天正...</SideTitle>
          {sideGroups.map((group, i) => (
            <React.Fragment key={i}>
              {i > 0 && <SideRule />}
              {group.map(([icon, text]) => (
                <SideItem key={text}><Icon name={icon} size={12} />{text}</SideItem>
              ))}
            </React.Fragment>
          ))}
        </SidePanel>
        <ToolColumn $ml={2} $mr={5}>
          <ColumnGrip />
          <ColumnTools names={drawTools} />
        </ToolColumn>

        <Center>
          <ViewRow>
            <Canvas>
              <Drawing>
                {dashes.map(([x, w]) => (
                  <g key={x}>
                    <rect x={x} y="230" width={w} height="5" rx="1" fill="#fff" />
                    <path d={`M${x + 2} 232.500H${x + w - 1}`} stroke="#111" strokeDasharray="3 2" />
                  </g>
                ))}
                {[265, 521, 775].map((x) => <rect key={x} x={x} y="228" width="8" height="8" fill="#2a80d8" />)}
                <path d="M627 88L573 192" stroke="#f01010" strokeWidth="2" />
                <path d="M568 201L570 183L581 189Z" fill="#f01010" />
                <path d="M12.500 443V479.500H49M9 476H16V483H9Z M14 430L18 435L23 430M18 435V440M52 469L61 478M61 469L52 478" stroke="#ccc" fill="none" />
              </Drawing>
              <ViewCube>
                <Svg width="112" height="116" viewBox="0 0 112 116">
                  <circle cx="54" cy="57" r="37" fill="none" stroke="#414141" strokeWidth="9" />
                  <rect x="36" y="39" width="36" height="36" fill="#ececec" />
                  <rect x="43" y="46" width="21" height="21" fill="#c5ceda" />
                  <path d="M54 48V63M44 63H63M54 55H61" stroke="#4b535f" strokeWidth="2" fill="none" />
                  <path d="M50 30H58L54 34Z M50 84H58L54 80Z M27 52V60L31 56Z M81 52V60L77 56Z" fill="#e8e8e8" />
                  <path d="M82 7L88 3V5Q96 6 97 10L88 9V11Z M99 12Q104 16 103 22L105 23L102 29L98 22H100Q101 17 97 14Z" fill="#555" />
                  <path d="M97 98H103L100 101Z M96 95.500H104" fill="#777" stroke="#777" />
                  <path d="M5 10L10 5L15 10H14V15H11.500V11H9V15H6.500V10Z" fill="#707070" />
                  <CompassText x="54" y="23">北</CompassText>
                  <CompassText x="54" y="101">南</CompassText>
                  <CompassText x="15" y="62">西</CompassText>
                  <CompassText x="92" y="62">东</CompassText>
                </Svg>
                <Wcs>WCS<Svg width="7" height="5"><path d="M1 1H6L3.500 4Z" fill="#eee" stroke="#aaa" /></Svg></Wcs>
              </ViewCube>

              <Palette>
                <PaletteRail>
                  <IconButton aria-label="关闭" $h={13}><Icon name="close" size={10} /></IconButton>
                  <IconButton aria-label="自动隐藏" $h={13}><Icon name="pin" size={11} /></IconButton>
                  <IconButton aria-label="特性菜单" $h={14}><Icon name="sheetMenu" size={11} /></IconButton>
                  <RailTitle>特性</RailTitle>
                  <Icon name="paletteIcon" size={13} />
                </PaletteRail>
                <PaletteBody>
                  <PaletteScroll><PaletteThumb /></PaletteScroll>
                  <PaletteMain>
                    <PaletteHead>
                      <Dropdown w={108} label="对象类型" value="直线" />
                      <HeadButtons>
                        <IconButton aria-label="切换"><Icon name="toggleAdd" size={12} /></IconButton>
                        <IconButton aria-label="选择对象" $w={18}><Icon name="selectObj" size={13} /></IconButton>
                        <IconButton aria-label="快速选择" $w={18}><Icon name="quick" size={13} /></IconButton>
                      </HeadButtons>
                    </PaletteHead>
                    <Section title="常规" rows={general} h={158} />
                    <Section title="三维效果" rows={[["材质", "ByLayer"]]} h={17} gap={2} />
                    <Section title="几何图形" rows={geometry} h={123} gap={3} />
                  </PaletteMain>
                </PaletteBody>
              </Palette>
              <Overlay width="179" height="38">
                <rect x="3" y="3" width="173" height="32" fill="none" stroke="#ec1010" strokeWidth="5" />
              </Overlay>

              <CommandLine>
                <CommandTools><DotGrip /><Icon name="xGray" size={11} /><StatusGap $w={1} /><Icon name="wrench" size={12} /></CommandTools>
                <Icon name="prompt" size={14} />
                <Icon name="caret" size={7} />
                <CommandInput aria-label="命令" placeholder="键入命令" />
                <IconButton aria-label="历史" $w={14}><Icon name="up" size={10} /></IconButton>
              </CommandLine>
            </Canvas>
            <VScroll><Icon name="chevUp" size={8} /><VThumb /></VScroll>
          </ViewRow>
          <LayoutBar>
            {["first", "prev", "next", "last"].map((n) => (
              <IconButton key={n} aria-label={n} $w={13} $h={13}><Icon name={n} size={8} /></IconButton>
            ))}
            <LayoutTab $on $w={42}>模型</LayoutTab>
            <LayoutTab $w={36}>布局1</LayoutTab>
            <Slash />
            <LayoutTab $w={36}>布局2</LayoutTab>
            <Slash />
            <HScroll><Icon name="chevLeft" size={8} /><HThumb /></HScroll>
          </LayoutBar>
        </Center>

        <ToolColumn $ml={5} $mr={1}>
          <ColumnGrip />
          <ColumnTools names={modifyTools} />
          <ColumnGrip $h={7} />
          <ColumnTools names={orderTools} />
        </ToolColumn>
      </Work>

      <StatusBar>
        <ScaleButton>比例 1:100 <Icon name="caret" size={8} /></ScaleButton>
        <Coords>42790, 30332, 0</Coords>
        {statusTools.map((n) => (
          <StatusTile key={n} aria-label={n} $on={statusOn.includes(n)}><Icon name={n} size={13} /></StatusTile>
        ))}
        <StatusGap $w={139} />
        <StatusTile $w={27} $text>模型</StatusTile>
        <StatusTile aria-label="模型空间"><Icon name="modelSp" size={13} /></StatusTile>
        <StatusTile aria-label="布局空间"><Icon name="layoutSp" size={13} /></StatusTile>
        <StatusGap $w={15} />
        <StatusTile $w={43} $text><Icon name="anno" size={12} />1:1<Icon name="caret" size={8} /></StatusTile>
        <StatusTile aria-label="注释可见"><Icon name="annoStar" size={13} /></StatusTile>
        <StatusTile aria-label="自动缩放"><Icon name="anno" size={12} /></StatusTile>
        <StatusGap $w={6} />
        <StatusTile aria-label="设置"><Icon name="gear" size={13} /></StatusTile>
        <StatusTile aria-label="锁定"><Icon name="lockOpen" size={13} /></StatusTile>
        <StatusTile aria-label="硬件加速"><Icon name="ball" size={13} /></StatusTile>
        <StatusTile $on $text $start $w={60}>编辑</StatusTile>
      </StatusBar>

      <FaintBrand><FaintName>Ba</FaintName><FaintSub>jing</FaintSub></FaintBrand>
      <Paws width="36" height="20"><ellipse cx="12" cy="8" rx="6" ry="8" fill="#b5b5b5" /><ellipse cx="28" cy="9" rx="6" ry="8" fill="#b5b5b5" /></Paws>
      <Brand>
        <Svg width="44" height="58" viewBox="0 0 44 58">
          <path d="M4 8Q8 9 9 6L11 9Q15 10 17 14L14 16L12 16Q10 21 13 26Q16 30 23 30Q33 29 37 32Q40 36 37 42L40 56H35L33 44L29 39Q20 41 14 38L12 56H8L9 42L6 56H2Q6 46 4 38Q-1 28 2 22Q7 16 6 12Z" fill="#d3d5da" />
          <path d="M11 9Q19 13 29 10Q38 10 42 2M12 8Q11 5 13 2M17 10Q13 6 15 1M20 10Q17 5 19 1M24 10Q21 5 23 2M28 9Q34 9 36 4" stroke="#d3d5da" strokeWidth="1.300" fill="none" />
        </Svg>
        <BrandText>
          <BrandName>3D溜溜网</BrandName>
          <BrandSite>3D66.COM</BrandSite>
        </BrandText>
      </Brand>
    </Page>
  );
}
